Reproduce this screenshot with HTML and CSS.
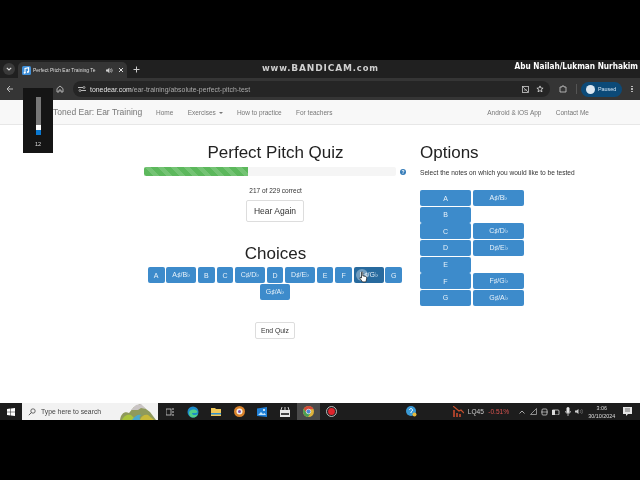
FILE: index.html
```html
<!DOCTYPE html>
<html lang="en">
<head>
<meta charset="utf-8">
<title>Perfect Pitch Quiz</title>
<link rel="stylesheet" href="styles.css">
</head>
<body>
<div class="letterbox"></div>
<div class="tabstrip">
  <div class="tabmenu"><svg width="6" height="4" viewBox="0 0 6 4"><path d="M.8.8 3 3l2.2-2.2" fill="none" stroke="#ddd" stroke-width="1.1"/></svg></div>
  <div class="tab">
    <svg class="favicon" width="9" height="9" viewBox="0 0 9 9"><rect width="9" height="9" rx="1.5" fill="#3f8fd8"/><path d="M3 7V2.4l3.6-.7v4.2" fill="none" stroke="#fff" stroke-width="1.1"/><circle cx="2.6" cy="6.8" r="1" fill="#fff"/><circle cx="5.9" cy="6" r="1" fill="#fff"/></svg>
    <span class="tabtitle">Perfect Pitch Ear Training Te</span>
    <svg class="tabsound" width="7" height="7" viewBox="0 0 7 7"><path d="M0 2.4h1.4L3.4.8v5.4L1.4 4.6H0z" fill="#ccc"/><path d="M4.4 2.2a2 2 0 0 1 0 2.6M5.4 1.4a3.2 3.2 0 0 1 0 4.2" fill="none" stroke="#ccc" stroke-width=".7"/></svg>
    <svg class="tabclose" width="6" height="6" viewBox="0 0 6 6"><path d="M1 1l4 4M5 1 1 5" stroke="#ddd" stroke-width="1"/></svg>
  </div>
  <svg class="newtab" width="7" height="7" viewBox="0 0 7 7"><path d="M3.5.5v6M.5 3.5h6" stroke="#ccc" stroke-width="1"/></svg>
  <div class="bandicam">www.<b>BANDICAM</b>.com</div>
  <div class="credit">Abu Nailah/Lukman Nurhakim</div>
</div>
<div class="toolbar">
  <svg class="back" width="8" height="8" viewBox="0 0 8 8"><path d="M7 4H1.4M4 1 1 4l3 3" fill="none" stroke="#bbb" stroke-width="1"/></svg>
  <svg class="home" width="8" height="8" viewBox="0 0 8 8"><path d="M1 3.6 4 1l3 2.6V7H5V5H3v2H1z" fill="none" stroke="#ccc" stroke-width=".8"/></svg>
  <div class="omnibox">
    <svg width="8" height="6" viewBox="0 0 8 6"><path d="M0 1.5h5M3 4.5h5" stroke="#ccc" stroke-width=".9"/><circle cx="6" cy="1.5" r="1" fill="none" stroke="#ccc" stroke-width=".7"/><circle cx="2" cy="4.5" r="1" fill="none" stroke="#ccc" stroke-width=".7"/></svg>
    <span class="url"><span class="host">tonedear.com</span>/ear-training/absolute-perfect-pitch-test</span>
    <svg class="omni-right" width="7" height="7" viewBox="0 0 7 7"><rect x=".5" y=".5" width="6" height="6" fill="none" stroke="#ccc" stroke-width=".8"/><path d="M1 1l5 5M2 4h3" stroke="#ccc" stroke-width=".7"/></svg>
    <svg class="star" width="8" height="8" viewBox="0 0 8 8"><path d="m4 .9.9 2.1 2.2.2-1.7 1.4.6 2.2L4 5.6 2 6.8l.6-2.2L.9 3.2 3.1 3z" fill="none" stroke="#ddd" stroke-width=".8"/></svg>
  </div>
  <svg class="ext" width="8" height="8" viewBox="0 0 8 8"><path d="M1 2h2V1h2v1h2v5H1z" fill="none" stroke="#ccc" stroke-width=".8"/></svg>
  <div class="divider"></div>
  <div class="profile"><span class="avatar"></span>Paused</div>
  <div class="kebab"><i></i><i></i><i></i></div>
</div>
<div class="navbar">
  <span class="brand">Toned Ear: Ear Training</span>
  <nav class="navlinks">
    <span>Home</span>
    <span>Exercises <i class="caret"></i></span>
    <span>How to practice</span>
    <span>For teachers</span>
  </nav>
  <nav class="navlinks navright">
    <span>Android &amp; iOS App</span>
    <span>Contact Me</span>
  </nav>
</div>
<main class="page">
  <section class="quiz">
    <h1>Perfect Pitch Quiz</h1>
    <div class="progress-row">
      <div class="progress"><div class="bar"></div></div>
      <span class="help">?</span>
    </div>
    <p class="score">217 of 229 correct</p>
    <button class="btn hear">Hear Again</button>
    <h1 class="choices-title">Choices</h1>
    <div class="choices">
      <span class="note">A</span><span class="note wide">A♯/B♭</span><span class="note">B</span><span class="note">C</span><span class="note wide">C♯/D♭</span><span class="note">D</span><span class="note wide">D♯/E♭</span><span class="note">E</span><span class="note">F</span><span class="note wide hover">F♯/G♭<span class="ripple"></span><svg class="cursor" width="9" height="12" viewBox="0 0 9 12"><path d="M2.5 1.2c.6-.7 1.3-.3 1.3.5v3.1l3 .8c.8.2 1 .8.9 1.5L7.2 10c-.1.6-.4.9-1 .9H4c-.5 0-.8-.2-1-.6L1 7.4c-.4-.7.4-1.3 1-.8l.5.5z" fill="#fff" stroke="#111" stroke-width=".7"/></svg></span><span class="note">G</span><span class="note wide">G♯/A♭</span>
    </div>
    <button class="btn end">End Quiz</button>
  </section>
  <aside class="options">
    <h1>Options</h1>
    <p class="hint">Select the notes on which you would like to be tested</p>
    <div class="optgrid">
      <span class="note">A</span><span class="note">A♯/B♭</span>
      <span class="note">B</span><span class="blank"></span>
      <span class="note">C</span><span class="note">C♯/D♭</span>
      <span class="note">D</span><span class="note">D♯/E♭</span>
      <span class="note">E</span><span class="blank"></span>
      <span class="note">F</span><span class="note">F♯/G♭</span>
      <span class="note">G</span><span class="note">G♯/A♭</span>
    </div>
  </aside>
</main>
<div class="taskbar">
  <div class="start"><svg width="8" height="8" viewBox="0 0 8 8"><path d="M0 1.1 3.5.6v3.2H0zM4 .5 8 0v3.8H4zM0 4.2h3.5v3.2L0 6.9zM4 4.2h4V8l-4-.6z" fill="#fff"/></svg></div>
  <div class="search">
    <svg width="8" height="8" viewBox="0 0 8 8"><circle cx="5" cy="3" r="2.2" fill="none" stroke="#333" stroke-width=".7"/><path d="M3.4 4.6.8 7.2" stroke="#333" stroke-width=".8"/></svg>
    <span>Type here to search</span>
    <svg class="landscape" width="36" height="17" viewBox="0 0 36 17"><path d="M0 17c1-7 5-9 9-7l5-6 6-3 6 5 4 3 6 8z" fill="#8f9a5c"/><path d="M11 7l5-5 5-1 5 5-5-1-3 2z" fill="#c9c4c4"/><path d="M2 17c2-5 6-6 9-5l5 5z" fill="#a9c43c"/><path d="M12 17c3-4 6-6 9-5-2 2-2 3 0 5z" fill="#4aa8cf"/><path d="M20 17c1-4 5-6 8-5l6 5z" fill="#c8b93a"/></svg>
  </div>
  <div class="tray-left">
    <svg width="8" height="8" viewBox="0 0 8 8"><rect x="0" y="1" width="5" height="6" fill="none" stroke="#ccc" stroke-width=".8"/><path d="M6 1h2M6 4h2M6 7h2" stroke="#ccc"/></svg>
    <svg width="12" height="12" viewBox="0 0 12 12"><circle cx="6" cy="6" r="5.5" fill="#1c8ac9"/><path d="M2 7c0-3 5-5 8-2 1 1 0 2-1.500 2H5c0 2 3 3 6 1-1 3-4 4-6 3.500C3 11 2 9 2 7z" fill="#4fd08a"/></svg>
    <svg width="10" height="9" viewBox="0 0 10 9"><path d="M0 1h4l1 1h5v7H0z" fill="#f0c85a"/><rect y="6" width="10" height="1.500" fill="#2f8fc9"/></svg>
    <svg width="11" height="11" viewBox="0 0 11 11"><circle cx="5.500" cy="5.500" r="5.500" fill="#d9822b"/><circle cx="5.500" cy="5.500" r="3" fill="#f4efe6"/><circle cx="5.500" cy="5.500" r="1.500" fill="#7c4bb0"/></svg>
    <svg width="10" height="10" viewBox="0 0 10 10"><path d="M0 1.500 10 0v10L0 9z" fill="#1f7fd6"/><path d="M1 8l3-3 2 2 1.500-1L9 8z" fill="#bfe3fa"/><circle cx="7" cy="3" r="1" fill="#fff"/></svg>
    <svg width="10" height="10" viewBox="0 0 10 10"><rect y="3" width="10" height="7" fill="#e8e8e8"/><path d="M1 3l1-3M5 3V0M9 3 8 0" stroke="#ccc"/><rect x="1" y="6" width="8" height="2" fill="#444"/></svg>
    <div class="chrome-slot"><svg width="11" height="11" viewBox="0 0 11 11"><circle cx="5.500" cy="5.500" r="5.500" fill="#e0b33a"/><path d="M5.500 0A5.500 5.500 0 0 0 .8 2.800L3 6.500l2.500-3.300h5A5.500 5.500 0 0 0 5.500 0z" fill="#d5483a"/><path d="M.8 2.800A5.500 5.500 0 0 0 5 11l2.500-3.800H3.500z" fill="#4a9f55"/><circle cx="5.500" cy="5.500" r="2.300" fill="#4a86d8" stroke="#fff" stroke-width=".6"/></svg></div>
    <svg class="rec" width="11" height="11" viewBox="0 0 11 11"><circle cx="5.500" cy="5.500" r="5" fill="#222" stroke="#ddd" stroke-width=".8"/><circle cx="5.500" cy="5.500" r="3.400" fill="#e0242c"/></svg>
  </div>
  <div class="tray-right">
    <svg class="helper" width="11" height="11" viewBox="0 0 11 11"><circle cx="5" cy="5" r="5" fill="#3a9ad6"/><path d="M3.500 4a1.500 1.500 0 1 1 2.200 1.400L5 6v1" fill="none" stroke="#fff" stroke-width="1"/><circle cx="8.500" cy="8.500" r="2" fill="#e6b93c"/></svg>
    <svg class="lq" width="11" height="11" viewBox="0 0 11 11"><path d="M0 11V4h2v7zM3 11V7h2v4zM6 11V8h2v3z" fill="#a5402a"/><path d="M0 0l6 5 2-1 3 3" fill="none" stroke="#c8502e" stroke-width="1.200"/></svg>
    <span class="ticker">LQ45</span><span class="pct">-0.51%</span>
    <svg class="chev" width="6" height="4" viewBox="0 0 6 4"><path d="M.5 3.500 3 1l2.500 2.500" fill="none" stroke="#ccc" stroke-width=".8"/></svg>
    <svg width="7" height="7" viewBox="0 0 7 7"><path d="M.5 6.500 6.500.5v6z" fill="none" stroke="#aaa" stroke-width=".8"/></svg>
    <svg width="7" height="8" viewBox="0 0 7 8"><rect x="1" y="1" width="5" height="6" rx="1" fill="none" stroke="#ccc" stroke-width=".8"/><path d="M0 4h7" stroke="#ccc" stroke-width=".7"/></svg>
    <svg width="8" height="6" viewBox="0 0 8 6"><rect x="0" y="1" width="7" height="5" rx="1" fill="none" stroke="#ddd" stroke-width=".8"/><rect x="0" y="1" width="3" height="5" fill="#ddd"/></svg>
    <svg width="6" height="9" viewBox="0 0 6 9"><rect x="1.500" width="3" height="6" rx="1.500" fill="#e5e5e5"/><path d="M.5 4a2.500 2.500 0 0 0 5 0M3 7v2" fill="none" stroke="#e5e5e5" stroke-width=".7"/></svg>
    <svg width="8" height="7" viewBox="0 0 8 7"><path d="M0 2.500h1.500L3.500 1v5L1.500 4.500H0z" fill="#ccc"/><path d="M5 2a2 2 0 0 1 0 3M6.500 1a3.500 3.500 0 0 1 0 5" fill="none" stroke="#888" stroke-width=".6"/></svg>
    <div class="clock"><span>3:06</span><span>30/10/2024</span></div>
    <svg class="notif" width="9" height="9" viewBox="0 0 9 9"><path d="M0 0h9v7H5L3 9V7H0z" fill="#e5e5e5"/><path d="M2 2h5M2 4h5" stroke="#444" stroke-width=".7"/></svg>
  </div>
</div>
<div class="letterbox"></div>
<div class="volume">
  <div class="track"><div class="white"></div><div class="level"></div></div>
  <span>12</span>
</div>
</body>
</html>
```

FILE: styles.css
```css
* { box-sizing: border-box; }
html, body { margin: 0; padding: 0; }
html { background: #000; }
body {
  position: relative;
  width: 640px;
  height: 480px;
  overflow: hidden;
  background: #000;
  display: flex;
  flex-direction: column;
  font-family: "Liberation Sans", Arial, sans-serif;
  color: #333;
  filter: blur(.3px);
}
.letterbox { height: 60px; flex: none; background: #000; }

.tabstrip {
  height: 18px;
  flex: none;
  background: #202020;
  display: flex;
  align-items: flex-end;
  padding-left: 3px;
  position: relative;
  color: #ddd;
}
.tabmenu {
  width: 12px;
  height: 12px;
  margin: 0 3px 3px 0;
  background: #3a3a3a;
  border-radius: 50%;
  display: flex;
  align-items: center;
  justify-content: center;
}
.tab {
  width: 109px;
  height: 16px;
  background: #353535;
  border-radius: 5px 5px 0 0;
  display: flex;
  align-items: center;
  gap: 2px;
  padding: 0 3px 0 4px;
}
.favicon { flex: none; }
.tabtitle { font-size: 4.950px; white-space: nowrap; width: 67px; color: #ddd; flex: none; }
.tabsound { margin-left: 4px; }
.tabclose { margin-left: 3px; }
.newtab { margin: 0 0 5px 6px; }
.bandicam {
  position: absolute;
  left: 262px;
  top: 3px;
  font-size: 8.4px;
  font-family: "DejaVu Sans", sans-serif;
  font-weight: bold;
  letter-spacing: .85px;
  color: #cfcfcf;
  line-height: 11px;
}
.bandicam b { font-size: 9px; }
.credit {
  position: absolute;
  right: 2px;
  top: 1px;
  font-family: "DejaVu Sans Condensed", sans-serif;
  font-weight: bold;
  font-size: 8.2px;
  color: #fff;
  line-height: 11px;
  white-space: nowrap;
}

.toolbar {
  height: 22px;
  flex: none;
  background: #353535;
  display: flex;
  align-items: center;
  padding-left: 6px;
  color: #ccc;
}
.back { margin-right: 42px; }
.home { margin-right: 9px; }
.omnibox {
  width: 477px;
  height: 16px;
  background: #252525;
  border-radius: 8px;
  display: flex;
  align-items: center;
  padding: 0 6px 0 5px;
}
.url { font-size: 6.9px; color: #aaa; margin-left: 4px; flex: 1; white-space: nowrap; }
.host { color: #e2e2e2; }
.omni-right { margin-right: 7px; }
.ext { margin-left: 9px; }
.divider { width: 1px; height: 10px; background: #555; margin: 0 0 0 9px; }
.profile {
  width: 41px;
  height: 15px;
  margin-left: 4px;
  background: #0c4a78;
  border-radius: 8px;
  display: flex;
  align-items: center;
  gap: 3px;
  padding-left: 5px;
  font-size: 5.4px;
  color: #cfe4f5;
}
.avatar { width: 9px; height: 9px; border-radius: 50%; background: #dce8f2; }
.kebab { margin-left: 9px; display: flex; flex-direction: column; gap: 1px; }
.kebab i { width: 1.500px; height: 1.500px; background: #ccc; border-radius: 50%; }

.navbar {
  height: 25px;
  flex: none;
  background: #f8f8f8;
  border-bottom: 1px solid #e7e7e7;
  display: flex;
  align-items: center;
  padding: 0 51px 0 53px;
  color: #777;
}
.brand { font-size: 8.500px; width: 103px; white-space: nowrap; }
.navlinks { display: flex; gap: 14.300px; font-size: 6.500px; white-space: nowrap; }
.navright { margin-left: auto; }
.caret {
  display: inline-block;
  margin-left: 1px;
  vertical-align: middle;
  border-top: 2px solid #777;
  border-left: 2px solid transparent;
  border-right: 2px solid transparent;
}

.page {
  flex: 1;
  min-height: 0;
  background: #fff;
  display: flex;
  padding: 0 0 0 144px;
}
.quiz { width: 263px; display: flex; flex-direction: column; align-items: center; }
h1 {
  margin: 0;
  font-weight: 400;
  font-size: 17px;
  line-height: 20px;
  color: #222;
}
.quiz > h1:first-child { margin-top: 18px; width: 263px; text-align: center; }
.progress-row { width: 263px; display: flex; align-items: center; margin-top: 4px; }
.progress {
  width: 252px;
  height: 9px;
  background: #f5f5f5;
  border-radius: 2px;
  overflow: hidden;
}
.bar {
  width: 104px;
  height: 9px;
  background-color: #5cb85c;
  background-image: linear-gradient(45deg, rgba(255,255,255,.15) 25%, transparent 25%, transparent 50%, rgba(255,255,255,.15) 50%, rgba(255,255,255,.15) 75%, transparent 75%);
  background-size: 13px 13px;
}
.help {
  width: 6px;
  height: 6px;
  margin-left: 4px;
  background: #337ab7;
  border-radius: 50%;
  color: #fff;
  font-size: 5px;
  font-weight: bold;
  line-height: 6px;
  text-align: center;
}
.score { width: 263px; margin: 11px 0 0; text-align: center; font-size: 6.500px; line-height: 8px; align-self: flex-start; }
.btn {
  display: block;
  background: #fff;
  border: 1px solid #ddd;
  border-radius: 2px;
  color: #333;
  font-family: inherit;
  padding: 0;
  align-self: flex-start;
}
.hear { width: 58px; height: 22px; font-size: 8.500px; margin: 5px 0 0 102px; }
.choices-title { margin-top: 22px; width: 263px; text-align: center; }
.choices {
  width: 256px;
  margin: 3px 0 0 3px;
  display: flex;
  flex-wrap: wrap;
  justify-content: center;
  gap: 1px 1.900px;
  align-self: flex-start;
}
.note {
  display: flex;
  align-items: center;
  justify-content: center;
  background: #3d8bcb;
  border-radius: 2px;
  color: #e8f2fa;
  font-size: 7px;
  height: 16px;
  white-space: nowrap;
}
.choices .note { width: 16.800px; position: relative; }
.choices .note.wide { width: 29.500px; }
.note.hover { background: #286a9e; }
.ripple {
  position: absolute;
  left: 2px;
  top: 2px;
  width: 12px;
  height: 12px;
  border-radius: 50%;
  background: rgba(255,255,255,.35);
}
.cursor { position: absolute; left: 5px; top: 4px; }
.end { width: 40px; height: 17px; font-size: 6.800px; margin: 22px 0 0 111px; }

.options { margin-left: 13px; width: 190px; }
.options h1 { margin-top: 18px; }
.hint { margin: 6px 0 0; font-size: 6.600px; line-height: 8px; white-space: nowrap; }
.optgrid {
  margin-top: 13px;
  display: grid;
  grid-template-columns: 51px 51px;
  grid-auto-rows: 16px;
  gap: .65px 2px;
}
.blank { display: block; }

.taskbar {
  height: 17px;
  flex: none;
  background: #1d1d1d;
  display: flex;
  align-items: center;
  position: relative;
}
.start { width: 22px; display: flex; justify-content: center; }
.search {
  width: 136px;
  height: 17px;
  background: #f2f2f2;
  display: flex;
  align-items: center;
  gap: 5px;
  padding-left: 6px;
  position: relative;
  color: #444;
  font-size: 6.800px;
}
.landscape { position: absolute; right: 2px; bottom: 0; }
.tray-left { display: flex; align-items: center; gap: 12.500px; margin-left: 8px; }
.chrome-slot {
  width: 23px;
  height: 17px;
  margin: 0 -5px;
  background: #4a4a4a;
  display: flex;
  align-items: center;
  justify-content: center;
}
.rec { margin-left: -2px; }
.tray-right {
  margin-left: auto;
  display: flex;
  align-items: center;
  gap: 4.300px;
  padding-right: 8.500px;
  color: #ccc;
  font-size: 6.600px;
}
.helper { margin-right: 31px; }
.lq { margin-right: 0; }
.pct { color: #d9534f; margin-right: 6px; }
.clock {
  display: flex;
  flex-direction: column;
  align-items: center;
  font-size: 5.400px;
  line-height: 8px;
  margin: 0 3px 0 1px;
  color: #ddd;
}

.volume {
  position: absolute;
  left: 23px;
  top: 88px;
  width: 30px;
  height: 65px;
  background: #151515;
  display: flex;
  flex-direction: column;
  align-items: center;
  padding-top: 9px;
  color: #ddd;
  font-size: 5.500px;
  z-index: 2;
}
.track {
  width: 5px;
  height: 38px;
  background: #777;
  display: flex;
  flex-direction: column;
  justify-content: flex-end;
}
.white { height: 5px; background: #fff; }
.level { height: 5px; background: #0a78d0; }
.volume span { margin-top: 6px; }
```
